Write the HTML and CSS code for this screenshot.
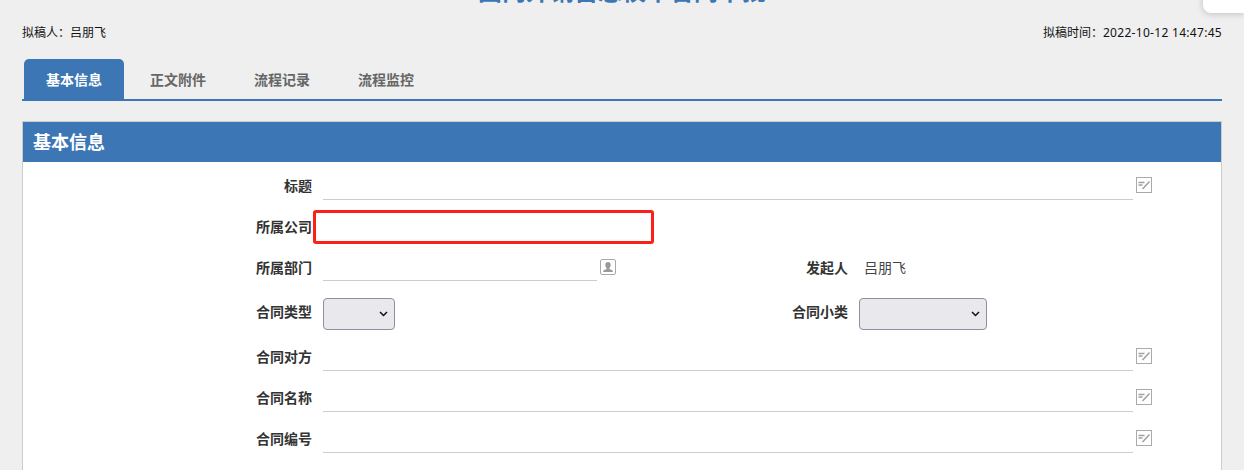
FILE: index.html
```html
<!DOCTYPE html>
<html lang="zh-CN">

<head>
    <meta charset="UTF-8">
    <title>合同审批</title>
    <link rel="stylesheet" href="styles.css">
</head>

<body>
    <div class="float-tip">2022</div>

    <h1 class="page-title">国内外销售总校平合同审批</h1>

    <div class="meta">
        <span>拟稿人：吕朋飞</span>
        <span>拟稿时间：<span class="meta-time">2022-10-12 14:47:45</span></span>
    </div>

    <div class="tabs">
        <a class="tab active">基本信息</a>
        <a class="tab">正文附件</a>
        <a class="tab">流程记录</a>
        <a class="tab">流程监控</a>
    </div>

    <div class="panel">
        <div class="panel-head">基本信息</div>
        <div class="form">
            <div class="row row-title">
                <label>标题</label>
                <div class="line wide"></div>
                <svg class="edit-icon" viewBox="0 0 16 16"><rect x="0.5" y="0.5" width="15" height="15" fill="#fff" stroke="#aaa"/><path d="M2.500 5.500h6M2.500 8h4M6.500 12l7-7.500" fill="none" stroke="#a0a0a0" stroke-width="1.500"/></svg>
            </div>
            <div class="row row-company">
                <label>所属公司</label>
                <div class="red-box"></div>
            </div>
            <div class="row row-dept">
                <label>所属部门</label>
                <div class="line half"></div>
                <svg class="user-icon" viewBox="0 0 16 16"><rect x="0.5" y="0.5" width="15" height="15" rx="1.5" fill="#fff" stroke="#aaa"/><path d="M8 3c1.700 0 2.700 1.200 2.700 3 0 1.300-.6 2.400-1.300 3v1l3.300 1.500V13H3.300v-1.500L6.600 10V9C5.900 8.400 5.300 7.300 5.300 6c0-1.800 1-3 2.700-3z" fill="#999"/></svg>
                <label class="right-label">发起人</label>
                <span class="value">吕朋飞</span>
            </div>
            <div class="row row-type">
                <label>合同类型</label>
                <select class="select-small"></select>
                <label class="type-label">合同小类</label>
                <select class="select-big"></select>
            </div>
            <div class="row row-plain">
                <label>合同对方</label>
                <div class="line wide"></div>
                <svg class="edit-icon" viewBox="0 0 16 16"><rect x="0.5" y="0.5" width="15" height="15" fill="#fff" stroke="#aaa"/><path d="M2.500 5.500h6M2.500 8h4M6.500 12l7-7.500" fill="none" stroke="#a0a0a0" stroke-width="1.500"/></svg>
            </div>
            <div class="row row-plain">
                <label>合同名称</label>
                <div class="line wide"></div>
                <svg class="edit-icon" viewBox="0 0 16 16"><rect x="0.5" y="0.5" width="15" height="15" fill="#fff" stroke="#aaa"/><path d="M2.500 5.500h6M2.500 8h4M6.500 12l7-7.500" fill="none" stroke="#a0a0a0" stroke-width="1.500"/></svg>
            </div>
            <div class="row row-plain">
                <label>合同编号</label>
                <div class="line wide"></div>
                <svg class="edit-icon" viewBox="0 0 16 16"><rect x="0.5" y="0.5" width="15" height="15" fill="#fff" stroke="#aaa"/><path d="M2.500 5.500h6M2.500 8h4M6.500 12l7-7.500" fill="none" stroke="#a0a0a0" stroke-width="1.500"/></svg>
            </div>
        </div>
    </div>
</body>

</html>
```

FILE: styles.css
```css
* {
    margin: 0;
    padding: 0;
    box-sizing: border-box;
    font-family: "Liberation Sans", "Noto Sans CJK SC", sans-serif;
}

html, body {
    height: 470px;
    overflow: hidden;
}

body {
    position: relative;
    background: #efefef;
    padding: 0 22px;
}

.float-tip {
    position: absolute;
    top: -11px;
    right: 0;
    width: 41px;
    height: 24px;
    padding-left: 8px;
    background: #fff;
    border-radius: 0 0 0 8px;
    box-shadow: 0 1px 7px rgba(0, 0, 0, 0.2);
    font-size: 12px;
    line-height: 14px;
    color: #555;
}

.page-title {
    height: 25px;
    margin-top: -21px;
    text-align: center;
    font-size: 24px;
    line-height: 25px;
    color: #3c76b5;
}

.meta {
    display: flex;
    justify-content: space-between;
    margin-top: 21px;
    height: 16px;
    font-size: 12px;
    line-height: 16px;
    color: #111;
}

.meta-time {
    font-family: "Noto Sans", sans-serif;
    letter-spacing: 0.3px;
}

.tabs {
    display: flex;
    gap: 4px;
    margin-top: 18px;
    height: 42px;
    padding-left: 2px;
    border-bottom: 2px solid #3c76b5;
}

.tab {
    width: 100px;
    padding-top: 13px;
    text-align: center;
    font-size: 14px;
    font-weight: bold;
    line-height: 16px;
    color: #666;
}

.tab.active {
    background: #3c76b5;
    border-radius: 5px 5px 0 0;
    color: #fff;
}

.panel {
    margin-top: 20px;
    height: 349px;
    background: #fff;
    border: 1px solid #ccc;
    border-bottom: none;
}

.panel-head {
    height: 40px;
    padding-left: 10px;
    background: #3c76b5;
    color: #fff;
    font-size: 18px;
    font-weight: bold;
    line-height: 42px;
}

.row {
    display: flex;
    align-items: flex-end;
    position: relative;
    font-size: 14px;
    line-height: 27px;
    color: #333;
}

.row label {
    width: 289px;
    flex-shrink: 0;
    text-align: right;
    font-weight: bold;
    color: #333;
}

.line {
    height: 100%;
    margin-left: 11px;
    border-bottom: 1px solid #ccc;
}

.line.wide {
    width: 810px;
}

.line.half {
    width: 274px;
}

.row-title {
    height: 38px;
}

.row-company {
    height: 41px;
}

/* red annotation drawn over the field */
.red-box {
    position: absolute;
    top: 10px;
    left: 290px;
    width: 341px;
    height: 34px;
    border: 3px solid #fb2118;
    border-radius: 3px;
}

.row-dept {
    height: 40px;
    line-height: 25px;
}

.row-type {
    align-items: flex-start;
    height: 32px;
    margin-top: 17px;
    line-height: 29px;
}

.row-plain {
    height: 41px;
}

.row .right-label {
    width: 56px;
    margin-left: 176px;
}

.row .type-label {
    width: 56px;
    margin-left: 397px;
}

.value {
    margin-left: 16px;
    color: #444;
}

.edit-icon, .user-icon {
    width: 16px;
    height: 16px;
    margin-left: 3px;
    margin-bottom: 7px;
    flex-shrink: 0;
}

.user-icon {
    margin-bottom: 6px;
}

select {
    appearance: none;
    height: 32px;
    margin-left: 11px;
    background: #e9e8ed url("data:image/svg+xml,%3Csvg xmlns='http://www.w3.org/2000/svg' width='9' height='6' viewBox='0 0 9 6'%3E%3Cpath d='M1 1l3.500 3.500L8 1' fill='none' stroke='%23111' stroke-width='1.500'/%3E%3C/svg%3E") no-repeat right 6px center;
    border: 1px solid #8f8f9d;
    border-radius: 4px;
}

.select-small {
    width: 72px;
}

.select-big {
    width: 128px;
}
```
